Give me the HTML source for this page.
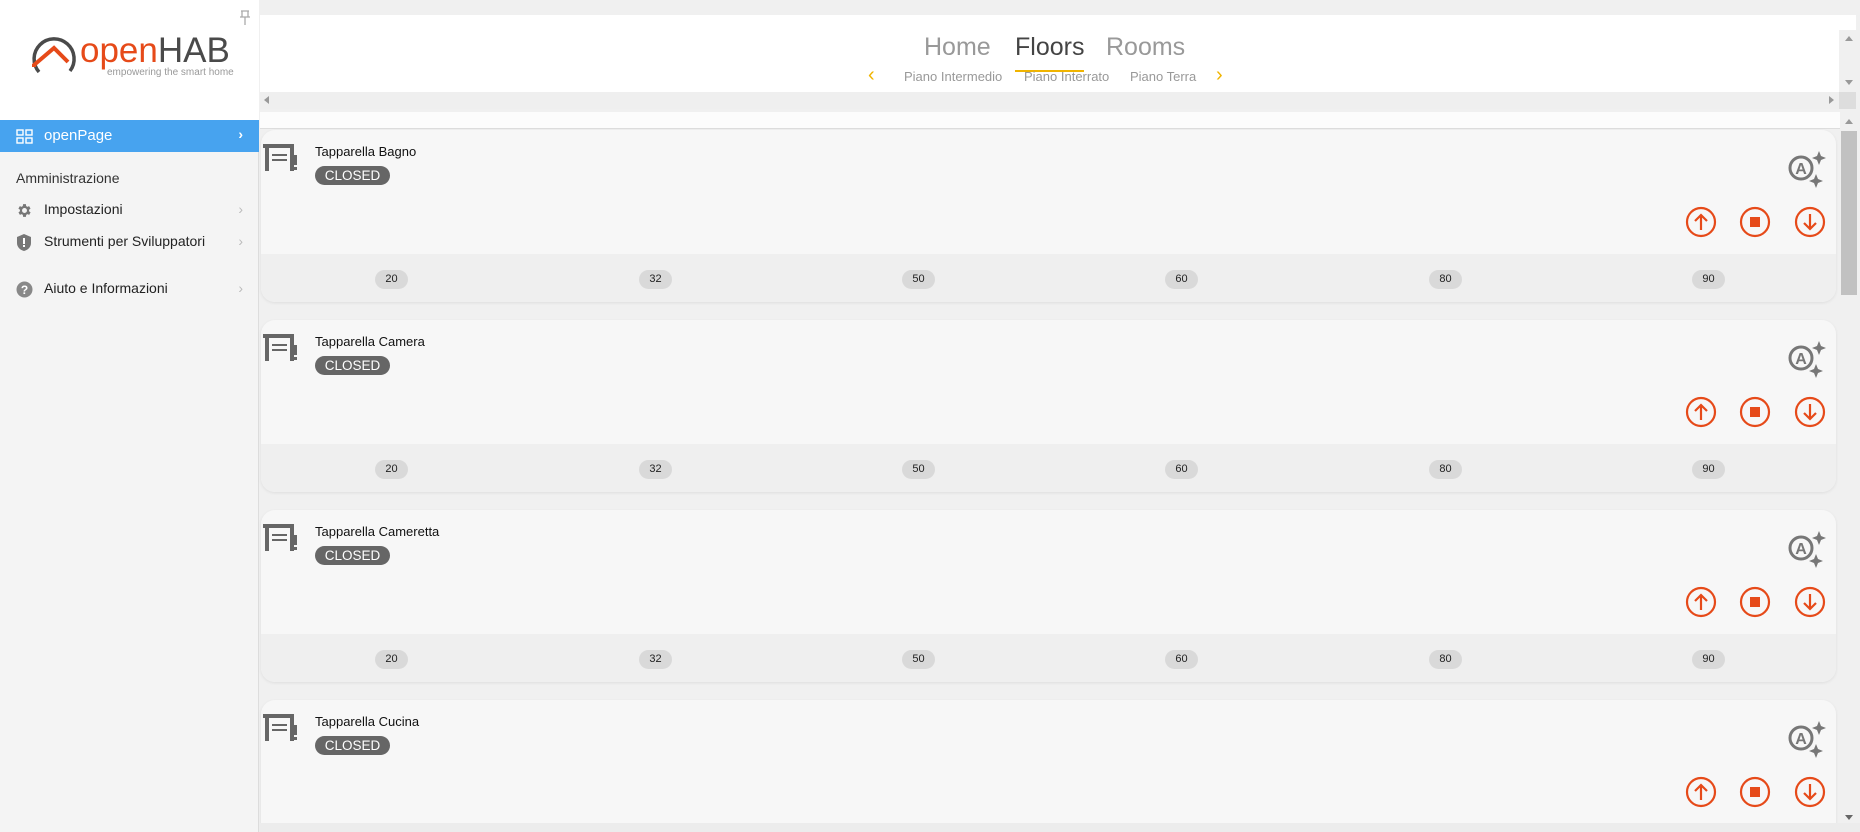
<!DOCTYPE html>
<html><head><meta charset="utf-8">
<style>
*{margin:0;padding:0;box-sizing:border-box}
html,body{width:1860px;height:832px;overflow:hidden}
body{background:#f0f0f0;font-family:"Segoe UI","Liberation Sans",sans-serif}
#root{position:relative;width:1860px;height:832px;overflow:hidden}
.abs{position:absolute}
#side{left:0;top:0;width:259px;height:832px;background:#f4f4f4;border-right:1px solid #ddd}
#logoarea{left:0;top:0;width:259px;height:120px;background:#fff}
.nav{position:absolute;left:0;width:259px;font-size:14px;color:#222}
.chev{position:absolute;right:16px;color:#bbb;font-size:14px}
#hdr{left:260px;top:15px;width:1596px;height:77px;background:#fff}
.tab{position:absolute;top:33px;font-size:25px;color:#999;font-weight:300}
.sub{position:absolute;top:69px;font-size:13px;color:#999}
.card{position:absolute;left:261px;width:1575px;height:172px;background:#f7f7f7;border-radius:14px;box-shadow:0 1px 3px rgba(0,0,0,.08);overflow:hidden}
.band{position:absolute;left:0;top:124px;width:100%;height:48px;background:#efefef}
.pill{position:absolute;top:140px;width:33px;height:19px;border-radius:10px;background:#d9d9d9;font-size:11px;text-align:center;line-height:19px;color:#222}
.title{position:absolute;left:54px;top:14px;font-size:13px;color:#111}
.badge{position:absolute;left:54px;top:36px;width:75px;height:19px;border-radius:10px;background:#666;color:#fff;font-size:13.5px;text-align:center;line-height:19px}
</style></head><body><div id="root">
<div id="side" class="abs"></div>
<div id="logoarea" class="abs">
<svg class="abs" style="left:238px;top:10px" width="14" height="16" viewBox="0 0 14 16"><path d="M3 1h8M4 1v6M10 1v6M2 7h10M7 7v8" stroke="#aaa" stroke-width="1.3" fill="none"/></svg>
<svg class="abs" style="left:30px;top:34px" width="48" height="48" viewBox="0 0 48 48">
<path d="M9 38 A20 20 0 1 1 40 37" stroke="#4a4a4a" stroke-width="3.5" fill="none"/>
<path d="M4 33 L4 31 L24 14 L38 28" stroke="#e64a19" stroke-width="4" fill="none"/>
</svg>
<div class="abs" style="left:80px;top:31px;font-size:35px;color:#e64a19;font-family:'Liberation Sans',sans-serif">open<span style="color:#4a4a4a">HAB</span></div>
<div class="abs" style="left:107px;top:67px;font-size:10px;color:#999">empowering the smart home</div>
</div>
<div class="nav" style="top:120px;height:32px;background:#47a3ef;color:#fff">
<svg class="abs" style="left:16px;top:9px" width="17" height="15" viewBox="0 0 17 15"><g fill="none" stroke="#fff" stroke-width="1.4"><rect x="1" y="1" width="6" height="5"/><rect x="10" y="1" width="6" height="5"/><rect x="1" y="9" width="6" height="5"/><rect x="10" y="9" width="6" height="5"/></g></svg>
<span class="abs" style="left:44px;top:7px;font-size:15px">openPage</span><span class="chev" style="color:#fff;top:6px;font-weight:bold">›</span></div>
<div class="nav" style="top:170px;left:16px;font-size:14px;color:#333">Amministrazione</div>
<div class="nav" style="top:201px">
<svg class="abs" style="left:16px;top:1px" width="17" height="17" viewBox="0 0 24 24"><path fill="#777" d="M19.4 13a7.5 7.5 0 0 0 0-2l2.1-1.6-2-3.5-2.5 1a7 7 0 0 0-1.7-1L15 3h-4l-.4 2.9a7 7 0 0 0-1.7 1l-2.5-1-2 3.5L6.6 11a7.5 7.5 0 0 0 0 2l-2.1 1.6 2 3.5 2.5-1a7 7 0 0 0 1.7 1L11 21h4l.4-2.9a7 7 0 0 0 1.7-1l2.5 1 2-3.5zM13 15.5a3.5 3.5 0 1 1 0-7 3.5 3.5 0 0 1 0 7z" transform="translate(-1 0)"/></svg>
<span class="abs" style="left:44px;top:0">Impostazioni</span><span class="chev" style="top:0">›</span></div>
<div class="nav" style="top:233px">
<svg class="abs" style="left:17px;top:1px" width="14" height="17" viewBox="0 0 14 17"><path d="M7 0L14 3v6c0 4-3 7-7 8C3 16 0 13 0 9V3z" fill="#777"/><rect x="6" y="4" width="2" height="6" fill="#fff"/><rect x="6" y="11" width="2" height="2" fill="#fff"/></svg>
<span class="abs" style="left:44px;top:0">Strumenti per Sviluppatori</span><span class="chev" style="top:0">›</span></div>
<div class="nav" style="top:280px">
<svg class="abs" style="left:16px;top:1px" width="17" height="17" viewBox="0 0 17 17"><circle cx="8.5" cy="8.5" r="8" fill="#888"/><text x="8.5" y="13" font-size="12" font-weight="bold" text-anchor="middle" fill="#fff" font-family="Liberation Sans">?</text></svg>
<span class="abs" style="left:44px;top:0">Aiuto e Informazioni</span><span class="chev" style="top:0">›</span></div>

<div id="hdr" class="abs"></div>
<div class="tab" style="left:924px">Home</div>
<div class="tab" style="left:1015px;color:#444">Floors<div style="position:absolute;left:0;right:0;top:37px;height:2px;background:#f0b400"></div></div>
<div class="tab" style="left:1106px">Rooms</div>
<div class="abs" style="left:868px;top:64px;font-size:20px;color:#f0b400">‹</div>
<div class="sub" style="left:904px">Piano Intermedio</div>
<div class="sub" style="left:1024px">Piano Interrato</div>
<div class="sub" style="left:1130px">Piano Terra</div>
<div class="abs" style="left:1216px;top:64px;font-size:20px;color:#f0b400">›</div>
<div class="abs" style="left:1839px;top:30px;width:17px;height:62px;background:#f0f0f0"></div>
<div class="abs" style="left:1845px;top:36px;border:4px solid transparent;border-bottom:5px solid #999;border-top:0"></div>
<div class="abs" style="left:1845px;top:80px;border:4px solid transparent;border-top:5px solid #999;border-bottom:0"></div>
<div class="abs" style="left:260px;top:92px;width:1596px;height:17px;background:#efefef"></div>
<div class="abs" style="left:264px;top:96px;border:4px solid transparent;border-right:5px solid #999;border-left:0"></div>
<div class="abs" style="left:1829px;top:96px;border:4px solid transparent;border-left:5px solid #999;border-right:0"></div>
<div class="abs" style="left:1839px;top:92px;width:17px;height:17px;background:#ddd"></div>
<div class="abs" style="left:260px;top:112px;width:1580px;height:17px;background:#fcfcfc;border-bottom:1px solid #ddd"></div>

<div id="cards"></div>

<div class="abs" style="left:1840px;top:112px;width:18px;height:712px;background:#f0f0f0"></div>
<div class="abs" style="left:1845px;top:119px;border:4px solid transparent;border-bottom:5px solid #999;border-top:0"></div>
<div class="abs" style="left:1841px;top:131px;width:16px;height:164px;background:#c1c1c1"></div>
<div class="abs" style="left:1845px;top:815px;border:4px solid transparent;border-top:5px solid #666;border-bottom:0"></div>
<div class="abs" style="left:260px;top:823px;width:1600px;height:9px;background:#ececec"></div>
</div>
<script>
var names=["Tapparella Bagno","Tapparella Camera","Tapparella Cameretta","Tapparella Cucina"];
var h="";
var px=[391,655,918,1181,1445,1708],pv=[20,32,50,60,80,90];
names.forEach(function(n,i){
var top=130+i*190;
h+='<div class="card" style="top:'+top+'px"><div class="band"></div>';
h+='<svg style="position:absolute;left:2px;top:14px" width="36" height="28" viewBox="0 0 36 28"><g fill="#666"><rect x="0" y="0" width="31" height="4"/><rect x="2" y="4" width="4" height="23"/><rect x="27" y="4" width="4" height="23"/><rect x="9" y="10" width="15" height="2"/><rect x="9" y="15" width="15" height="2"/><rect x="30" y="11" width="4" height="10"/><rect x="30" y="23" width="4" height="3"/></g></svg>';
h+='<div class="title">'+n+'</div><div class="badge">CLOSED</div>';
h+='<svg style="position:absolute;left:1525px;top:20px" width="40" height="40" viewBox="0 0 40 40"><circle cx="15" cy="18" r="11" fill="none" stroke="#777" stroke-width="3"/><text x="15" y="24" font-size="16" font-weight="bold" text-anchor="middle" fill="#777" font-family="Liberation Sans">A</text><path d="M33 1l2 5 5 2-5 2-2 5-2-5-5-2 5-2z" fill="#777"/><path d="M30 24l2 5 5 2-5 2-2 5-2-5-5-2 5-2z" fill="#777"/></svg>';
[1440,1494,1549].forEach(function(x,k){
h+='<svg style="position:absolute;left:'+(x-16)+'px;top:76px" width="32" height="32" viewBox="0 0 32 32"><circle cx="16" cy="16" r="14" fill="none" stroke="#e64a19" stroke-width="2.2"/>';
if(k==0)h+='<path d="M16 24V9M10 15l6-6 6 6" stroke="#e64a19" stroke-width="2.2" fill="none"/>';
if(k==1)h+='<rect x="11" y="11" width="10" height="10" fill="#e64a19"/>';
if(k==2)h+='<path d="M16 8v15M10 17l6 6 6-6" stroke="#e64a19" stroke-width="2.2" fill="none"/>';
h+='</svg>';});
px.forEach(function(x,k){h+='<div class="pill" style="left:'+(x-261-16)+'px">'+pv[k]+'</div>';});
h+='</div>';});
document.getElementById('cards').innerHTML=h;
</script>
</body></html>
